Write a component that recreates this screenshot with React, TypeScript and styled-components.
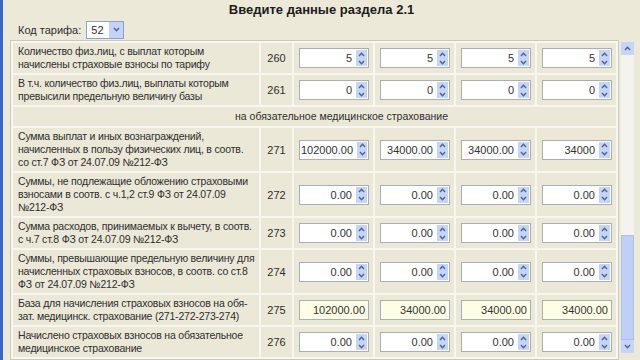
import styled, { createGlobalStyle } from "styled-components";

const GlobalStyle = createGlobalStyle`
  html, body { margin: 0; padding: 0; }
  body {
    background: #ECE9D8;
    font-family: "Liberation Sans", "DejaVu Sans", sans-serif;
    font-size: 11px;
    color: #2e2e2e;
  }
`;

const Window = styled.div`
  height: 360px;
  overflow: hidden;
  border-left: 3px solid #3a66cf;
  box-sizing: border-box;
  display: flex;
  flex-direction: column;
`;

const Title = styled.h1`
  margin: 0;
  height: 20px;
  line-height: 19px;
  text-align: center;
  font-size: 13px;
  font-weight: bold;
  color: #1c1c1c;
`;

const TariffRow = styled.div`
  display: flex;
  align-items: center;
  gap: 5px;
  height: 28px;
  padding-left: 15px;
`;

const Combo = styled.div`
  display: flex;
  align-items: center;
  width: 38px;
  height: 18px;
  box-sizing: border-box;
  border: 1px solid #8ea3c4;
  background: #fff;
`;

const ComboText = styled.span`
  flex: 1;
  padding-left: 4px;
`;

const ComboButton = styled.div`
  width: 14px;
  height: 16px;
  background: #c3d3fa;
  display: flex;
  align-items: center;
  justify-content: center;
`;

const ScrollArea = styled.div`
  display: flex;
  align-items: flex-start;
  gap: 2px;
  padding-left: 7px;
`;

const Grid = styled.table`
  table-layout: fixed;
  width: 607px;
  border-collapse: separate;
  border-spacing: 2px;
  background: #f7f6f0;
  border: 1px solid #cdc9b9;
`;

const LabelCell = styled.td`
  width: 238px;
  padding: 2px 3px 2px 5px;
  background: #ebe8d8;
  font-size: 10.5px;
  letter-spacing: -0.2px;
  line-height: 13px;
  white-space: nowrap;
  overflow: hidden;
`;

const CodeCell = styled.td`
  width: 29px;
  background: #ebe8d8;
  text-align: center;
`;

const ValueCell = styled.td`
  width: 70px;
  padding: 0 4px 0 5px;
  background: #ebe8d8;
  vertical-align: middle;
`;

const HeaderCell = styled.td`
  padding: 3px 0 3px 54px;
  background: #ebe8d8;
  text-align: center;
  font-size: 10.5px;
  line-height: 13px;
`;

const Field = styled.div<{ $readonly?: boolean }>`
  display: flex;
  align-items: center;
  height: 20px;
  box-sizing: border-box;
  border: 1px solid #a9adb4;
  background: ${(p) => (p.$readonly ? "#fefee6" : "#ffffff")};
  padding: 1px;
`;

const FieldText = styled.span<{ $readonly?: boolean }>`
  flex: 1;
  text-align: right;
  padding-right: ${(p) => (p.$readonly ? "2px" : "4px")};
  color: #333;
`;

const Spin = styled.div`
  width: 11px;
  height: 16px;
  background: #c5d5f8;
  display: flex;
  flex-direction: column;
  align-items: center;
  justify-content: space-around;
`;

const ScrollBar = styled.div`
  width: 13px;
  height: 311px;
  margin-top: 2px;
  display: flex;
  flex-direction: column;
  background: #f4f3ee;
`;

const ArrowButton = styled.div`
  height: 13px;
  background: #c5d4f8;
  display: flex;
  align-items: center;
  justify-content: center;
`;

const Track = styled.div`
  flex: 1;
  display: flex;
  flex-direction: column;
  justify-content: flex-end;
`;

const Thumb = styled.div`
  height: 105px;
  box-sizing: border-box;
  background: #bfcff6;
  border: 1px solid #aebfe9;
`;

const Chevron = ({ up, w = 7 }: { up?: boolean; w?: number }) => (
  <svg width={w} height={5} viewBox="0 0 7 5">
    <path
      d={up ? "M1 4 L3.5 1.2 L6 4" : "M1 1 L3.5 3.8 L6 1"}
      fill="none"
      stroke="#4d6392"
      strokeWidth="1.4"
    />
  </svg>
);

type DataRow =
  | { kind: "row"; code: string; lines: string[]; values: string[]; readonly?: boolean }
  | { kind: "header"; text: string };

const zeros = ["0.00", "0.00", "0.00", "0.00"];

const rows: DataRow[] = [
  {
    kind: "row",
    code: "260",
    lines: ["Количество физ.лиц, с выплат которым", "начислены страховые взносы по тарифу"],
    values: ["5", "5", "5", "5"],
  },
  {
    kind: "row",
    code: "261",
    lines: ["В т.ч. количество физ.лиц, выплаты которым", "превысили предельную величину базы"],
    values: ["0", "0", "0", "0"],
  },
  { kind: "header", text: "на обязательное медицинское страхование" },
  {
    kind: "row",
    code: "271",
    lines: [
      "Сумма выплат и иных вознаграждений,",
      "начисленных в пользу физических лиц, в соотв.",
      "со ст.7 ФЗ от 24.07.09 №212-ФЗ",
    ],
    values: ["102000.00", "34000.00", "34000.00", "34000"],
  },
  {
    kind: "row",
    code: "272",
    lines: [
      "Суммы, не подлежащие обложению страховыми",
      "взносами в соотв. с ч.1,2 ст.9 ФЗ от 24.07.09",
      "№212-ФЗ",
    ],
    values: zeros,
  },
  {
    kind: "row",
    code: "273",
    lines: ["Сумма расходов, принимаемых к вычету, в соотв.", "с ч.7 ст.8 ФЗ от 24.07.09 №212-ФЗ"],
    values: zeros,
  },
  {
    kind: "row",
    code: "274",
    lines: [
      "Суммы, превышающие предельную величину для",
      "начисленных страховых взносов, в соотв. со ст.8",
      "ФЗ от 24.07.09 №212-ФЗ",
    ],
    values: zeros,
  },
  {
    kind: "row",
    code: "275",
    lines: ["База для начисления страховых взносов на обя-", "зат. медицинск. страхование (271-272-273-274)"],
    values: ["102000.00", "34000.00", "34000.00", "34000.00"],
    readonly: true,
  },
  {
    kind: "row",
    code: "276",
    lines: ["Начислено страховых взносов на обязательное", "медицинское страхование"],
    values: zeros,
  },
];

function SpinBox({ value, readonly }: { value: string; readonly?: boolean }) {
  return (
    <Field $readonly={readonly}>
      <FieldText $readonly={readonly}>{value}</FieldText>
      {!readonly && (
        <Spin>
          <Chevron up />
          <Chevron />
        </Spin>
      )}
    </Field>
  );
}

export default function App() {
  return (
    <>
      <GlobalStyle />
      <Window>
        <Title>Введите данные раздела 2.1</Title>
        <TariffRow>
          <span>Код тарифа:</span>
          <Combo>
            <ComboText>52</ComboText>
            <ComboButton>
              <Chevron />
            </ComboButton>
          </Combo>
        </TariffRow>
        <ScrollArea>
          <Grid>
            <tbody>
              {rows.map((r, i) =>
                r.kind === "header" ? (
                  <tr key={i}>
                    <HeaderCell colSpan={6}>{r.text}</HeaderCell>
                  </tr>
                ) : (
                  <tr key={i}>
                    <LabelCell>
                      {r.lines.map((l, j) => (
                        <div key={j}>{l}</div>
                      ))}
                    </LabelCell>
                    <CodeCell>{r.code}</CodeCell>
                    {r.values.map((v, j) => (
                      <ValueCell key={j}>
                        <SpinBox value={v} readonly={r.readonly} />
                      </ValueCell>
                    ))}
                  </tr>
                )
              )}
            </tbody>
          </Grid>
          <ScrollBar>
            <ArrowButton>
              <Chevron up />
            </ArrowButton>
            <Track>
              <Thumb />
            </Track>
            <ArrowButton>
              <Chevron />
            </ArrowButton>
          </ScrollBar>
        </ScrollArea>
      </Window>
    </>
  );
}
